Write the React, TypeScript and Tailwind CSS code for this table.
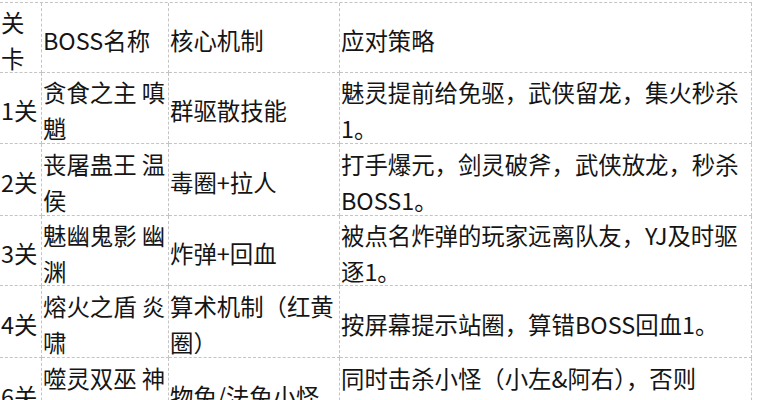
const rows: { h: string; cells: string[][] }[] = [
  { h: "h-[70px]", cells: [["关", "卡"], ["BOSS名称"], ["核心机制"], ["应对策略"]] },
  {
    h: "h-[71px]",
    cells: [["1关"], ["贪食之主 嗔", "魈"], ["群驱散技能"], ["魅灵提前给免驱，武侠留龙，集火秒杀", "1。"]],
  },
  {
    h: "h-[72px]",
    cells: [["2关"], ["丧屠蛊王 温", "侯"], ["毒圈+拉人"], ["打手爆元，剑灵破斧，武侠放龙，秒杀", "BOSS1。"]],
  },
  {
    h: "h-[70px]",
    cells: [["3关"], ["魅幽鬼影 幽", "渊"], ["炸弹+回血"], ["被点名炸弹的玩家远离队友，YJ及时驱", "逐1。"]],
  },
  {
    h: "h-[72px]",
    cells: [["4关"], ["熔火之盾 炎", "啸"], ["算术机制（红黄", "圈）"], ["按屏幕提示站圈，算错BOSS回血1。"]],
  },
  {
    h: "h-[72px]",
    cells: [["6关"], ["噬灵双巫 神", "荼"], ["物免/法免小怪"], ["同时击杀小怪（小左&阿右），否则", "BOSS回血1。"]],
  },
];

const widths = ["w-[42px]", "w-[127px]", "w-[171px]", "w-[412px]"];

export default function App() {
  return (
    <div className="h-[400px] w-[758px] overflow-hidden bg-white pt-[2px]">
      <div
        className="w-[752px] border-t border-dashed border-[#c4c4c4] text-[23.4px] leading-[36px] text-[#151515]"
        style={{ fontFamily: '"Noto Sans CJK SC", "Noto Sans", sans-serif' }}
      >
        {rows.map((row, i) => (
          <div key={i} className={`flex ${row.h}`}>
            {row.cells.map((lines, j) => (
              <div
                key={j}
                className={`${widths[j]} flex shrink-0 flex-col justify-center overflow-visible whitespace-nowrap border-b border-r border-dashed border-[#c4c4c4] pl-[1px] pt-[4px]`}
              >
                {lines.map((t, k) => (
                  <span key={k}>{t}</span>
                ))}
              </div>
            ))}
          </div>
        ))}
      </div>
    </div>
  );
}
